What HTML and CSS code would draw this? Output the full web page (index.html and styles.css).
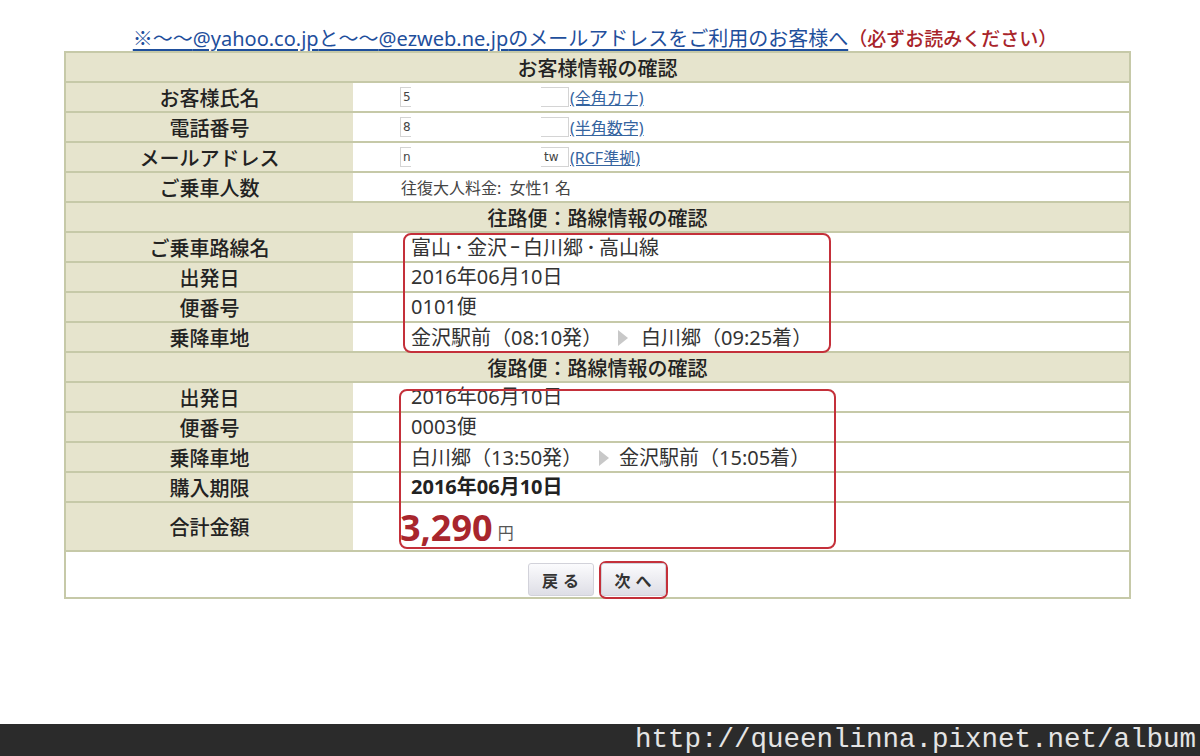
FILE: index.html
```html
<!DOCTYPE html>
<html lang="ja">
<head>
<meta charset="utf-8">
<title>お客様情報の確認</title>
<link rel="stylesheet" href="styles.css">
</head>
<body>
<div class="page">
  <p class="notice"><a href="#" class="notice-link"><span class="cjk">※～～</span>@yahoo.co.jp<span class="cjk">と～～</span>@ezweb.ne.jp<span class="cjk">のメールアドレスをご利用のお客様へ</span></a><span class="must">（必ずお読みください）</span></p>

  <div class="sheet">
    <div class="row head">お客様情報の確認</div>
    <div class="row">
      <div class="lbl">お客様氏名</div>
      <div class="val form">
        <span class="field"><span class="fl">5</span><span class="fgap"></span><span class="fr"></span></span>
        <a href="#" class="hint">(全角カナ)</a>
      </div>
    </div>
    <div class="row">
      <div class="lbl">電話番号</div>
      <div class="val form">
        <span class="field"><span class="fl">8</span><span class="fgap"></span><span class="fr"></span></span>
        <a href="#" class="hint">(半角数字)</a>
      </div>
    </div>
    <div class="row">
      <div class="lbl">メールアドレス</div>
      <div class="val form">
        <span class="field"><span class="fl">n</span><span class="fgap"></span><span class="fr">tw</span></span>
        <a href="#" class="hint">(RCF準拠)</a>
      </div>
    </div>
    <div class="row">
      <div class="lbl">ご乗車人数</div>
      <div class="val small">往復大人料金:&nbsp; 女性1 名</div>
    </div>

    <div class="row head">往路便<span class="cjk">：</span>路線情報の確認</div>
    <div class="row">
      <div class="lbl">ご乗車路線名</div>
      <div class="val route"><span class="txt">富山<span class="sep">･</span>金沢<span class="sep dash">ｰ</span>白川郷<span class="sep">･</span>高山線</span></div>
    </div>
    <div class="row">
      <div class="lbl">出発日</div>
      <div class="val route"><span class="txt">2016年06月10日</span></div>
    </div>
    <div class="row">
      <div class="lbl">便番号</div>
      <div class="val route"><span class="txt">0101便</span></div>
    </div>
    <div class="row">
      <div class="lbl">乗降車地</div>
      <div class="val route"><span class="txt"><span class="stop stop-out">金沢駅前<span class="cjk">（</span>08:10発<span class="cjk">）</span></span><svg class="arrow" viewBox="0 0 10 16" width="10" height="16"><path d="M0 0 L10 8 L0 16 Z" fill="#c8c8c8"/></svg>白川郷<span class="cjk">（</span>09:25着<span class="cjk">）</span></span></div>
    </div>

    <div class="row head">復路便<span class="cjk">：</span>路線情報の確認</div>
    <div class="row">
      <div class="lbl">出発日</div>
      <div class="val route"><span class="txt">2016年06月10日</span></div>
    </div>
    <div class="row">
      <div class="lbl">便番号</div>
      <div class="val route"><span class="txt">0003便</span></div>
    </div>
    <div class="row">
      <div class="lbl">乗降車地</div>
      <div class="val route"><span class="txt"><span class="stop stop-ret">白川郷<span class="cjk">（</span>13:50発<span class="cjk">）</span></span><svg class="arrow arrow-ret" viewBox="0 0 10 16" width="10" height="16"><path d="M0 0 L10 8 L0 16 Z" fill="#c8c8c8"/></svg>金沢駅前<span class="cjk">（</span>15:05着<span class="cjk">）</span></span></div>
    </div>
    <div class="row">
      <div class="lbl">購入期限</div>
      <div class="val route strong"><span class="txt">2016年06月10日</span></div>
    </div>
    <div class="row tall">
      <div class="lbl">合計金額</div>
      <div class="val total"><span class="price">3,290</span><span class="yen">円</span></div>
    </div>
    <div class="row btns">
      <button class="btn" type="button">戻る</button>
      <span class="btn-mark"><button class="btn" type="button">次へ</button></span>
    </div>

    <div class="mark mark-out"></div>
    <div class="mark mark-ret"></div>
  </div>

  <div class="watermark">http://queenlinna.pixnet.net/album</div>
</div>
</body>
</html>
```

FILE: styles.css
```css
html, body {
  margin: 0;
  padding: 0;
  background: #ffffff;
}

body {
  font-family: "Noto Sans", "Noto Sans CJK JP", sans-serif;
  color: #333333;
  text-spacing-trim: space-all;
}

.page {
  width: 1200px;
  height: 756px;
  display: flex;
  flex-direction: column;
  overflow: hidden;
}

.notice {
  margin: 24px 0 0;
  padding-right: 10px;
  height: 27px;
  line-height: 27px;
  font-size: 20px;
  text-align: center;
  white-space: nowrap;
}

.cjk {
  font-family: "Noto Sans CJK JP", sans-serif;
}

.notice-link {
  color: #1f4f9c;
  text-decoration: underline;
  text-underline-offset: 3px;
}

.must {
  color: #a8242a;
  margin-left: 0;
  font-family: "Noto Sans CJK JP", sans-serif;
  font-size: 19px;
  font-weight: 500;
}

.sheet {
  position: relative;
  margin-left: 64px;
  width: 1067px;
  box-sizing: border-box;
  border: 2px solid #c6c9a8;
}

.row {
  display: flex;
  height: 28px;
  border-top: 2px solid #c6c9a8;
}

.row:first-child {
  border-top: 0;
}

.row.head {
  background: #e6e4cd;
  justify-content: center;
  align-items: center;
  font-size: 20px;
  font-weight: 500;
  color: #222222;
}

.lbl {
  width: 287px;
  flex: none;
  background: #e6e4cd;
  display: flex;
  align-items: center;
  justify-content: center;
  font-size: 20px;
  font-weight: 500;
  color: #222222;
}

.val {
  flex: 1;
  display: flex;
  align-items: center;
  padding-left: 47px;
  font-size: 20px;
  color: #333333;
  white-space: nowrap;
}

.val.route {
  padding-left: 58px;
}

.txt {
  display: block;
  line-height: 28px;
}

.stop {
  display: inline-block;
}

.stop-out {
  width: 192px;
}

.stop-ret {
  width: 173px;
}

.val.strong {
  font-weight: bold;
  color: #222222;
}

.val.small {
  padding-left: 48px;
  font-size: 16px;
  color: #444444;
}

.sep {
  font-family: "Noto Sans CJK JP", sans-serif;
  margin: 0 3px;
}

.sep.dash {
  margin: 0 3px;
}

.field {
  display: flex;
  height: 20px;
  font-family: "DejaVu Sans", sans-serif;
  font-size: 12px;
  line-height: 18px;
  color: #444444;
}

.fl {
  width: 8px;
  padding-left: 2px;
  overflow: hidden;
  border: 1px solid #d4d4d4;
  border-right: 0;
}

.fgap {
  width: 130px;
}

.fr {
  width: 24px;
  padding-left: 3px;
  border: 1px solid #d4d4d4;
  border-left: 0;
}

.hint {
  margin-left: 1px;
  font-size: 16px;
  color: #35649f;
  text-decoration: underline;
}

.arrow {
  display: inline-block;
  vertical-align: -1px;
  margin: 0 13px 0 15px;
}

.arrow-ret {
  margin: 0 10px 0 15px;
}

.row.tall {
  height: 47px;
}

.val.total {
  align-items: flex-end;
  padding-left: 47px;
  padding-bottom: 2px;
}

.price {
  font-size: 36px;
  line-height: 40px;
  font-weight: bold;
  color: #a8262d;
}

.yen {
  margin-left: 5px;
  font-size: 16px;
  line-height: 30px;
  color: #555555;
}

.row.btns {
  height: 47px;
  justify-content: center;
  align-items: flex-start;
  padding-top: 11px;
  box-sizing: border-box;
}

.btn {
  width: 66px;
  height: 33px;
  margin: 0;
  padding: 0 0 0 5px;
  border: 1px solid #d2d2da;
  border-radius: 3px;
  background: linear-gradient(#fbfbfd, #dedee6);
  font-family: "Noto Sans CJK JP", sans-serif;
  font-size: 16px;
  font-weight: bold;
  letter-spacing: 5px;
  color: #333333;
}

.btn-mark {
  display: flex;
  margin: -2px 0 0 5px;
  padding: 0 0 1px;
  border: 2px solid #c4303a;
  border-radius: 7px;
}

.btn-mark .btn {
  width: 65px;
}

.mark {
  position: absolute;
  box-sizing: border-box;
  border: 2px solid #c4303a;
  border-radius: 8px;
  pointer-events: none;
}

.mark-out {
  left: 337px;
  top: 180px;
  width: 428px;
  height: 120px;
}

.mark-ret {
  left: 333px;
  top: 336px;
  width: 437px;
  height: 160px;
}

.watermark {
  margin-top: auto;
  height: 32px;
  background: #2b2b2b;
  color: #e4e4e4;
  font-family: "Liberation Mono", "Courier New", monospace;
  font-size: 27.5px;
  line-height: 32px;
  text-align: right;
  padding-right: 4px;
  white-space: nowrap;
}
```
